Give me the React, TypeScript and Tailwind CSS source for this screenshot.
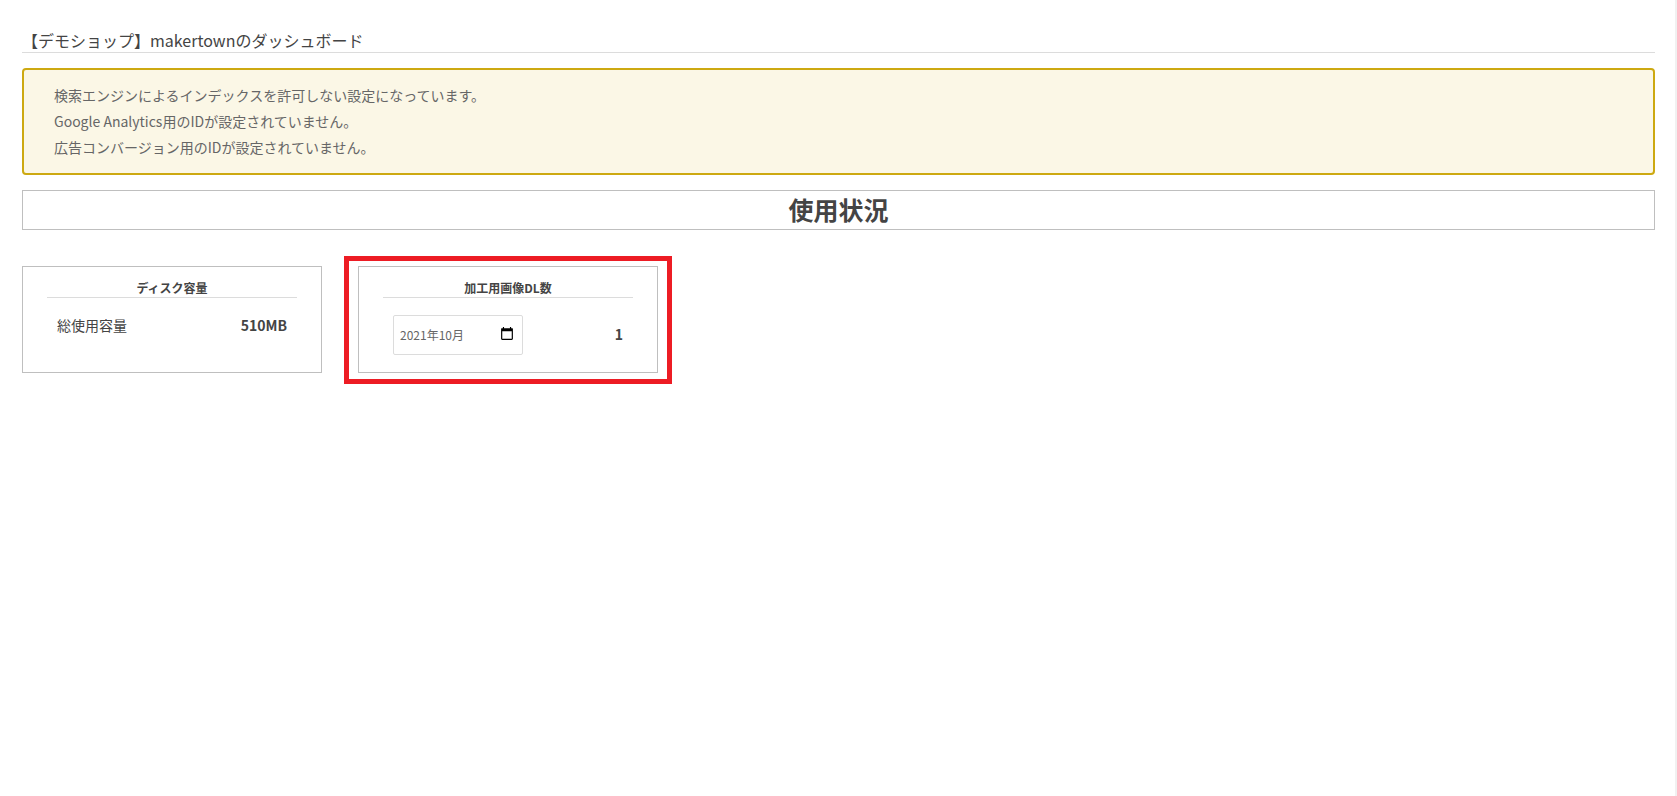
import { useState } from "react";
import type { ReactNode } from "react";

const notices = [
  "検索エンジンによるインデックスを許可しない設定になっています。",
  "Google Analytics用のIDが設定されていません。",
  "広告コンバージョン用のIDが設定されていません。",
];

const CalendarIcon = () => {
  return (
    <svg viewBox="2 1 20 22" className="w-3 h-[13px]" fill="#000" aria-hidden="true">
      <path d="M21 3h-2V1h-2v2H7V1H5v2H3c-.6 0-1 .4-1 1v17c0 1.1.9 2 2 2h16c1.1 0 2-.9 2-2V4c0-.6-.4-1-1-1zm-1 18H4V8h16v13z" />
    </svg>
  );
};

const Card = ({ title, children }: { title: string; children: ReactNode }) => {
  return (
    <section className="flex flex-col w-[300px] h-[107px] border border-[#bfbfbf] px-6 pt-3">
      <h3 className="border-b border-[#dcdcdc] text-center text-[12px] leading-[18px] font-bold">
        {title}
      </h3>
      {children}
    </section>
  );
};

const App = () => {
  const [month, setMonth] = useState("2021年10月");

  return (
    <div
      lang="ja"
      className="min-h-screen border-r-2 border-[#f1f1f1] bg-white pl-[22px] pr-5 pt-7 font-['Noto_Sans_CJK_JP',sans-serif] text-[#444]"
    >
      <h1 className="border-b border-[#dcdcdc] text-[16px] leading-6">
        【デモショップ】makertownのダッシュボード
      </h1>

      <ul className="mt-[15px] rounded border-2 border-[#cda911] bg-[#fbf7e6] px-[30px] pt-3 pb-[13px] text-[14px] leading-[26px] text-[#666]">
        {notices.map((notice) => (
          <li key={notice}>{notice}</li>
        ))}
      </ul>

      <h2 className="mt-[15px] border border-[#bfbfbf] pb-[2px] text-center text-[25px] leading-9 font-bold">
        使用状況
      </h2>

      <div className="flex flex-wrap gap-9 mt-9">
        <Card title="ディスク容量">
          <dl className="flex items-center justify-between px-[10px] pt-[15px] text-[14px] leading-6">
            <dt>総使用容量</dt>
            <dd className="font-bold">510MB</dd>
          </dl>
        </Card>

        <div className="relative">
          <Card title="加工用画像DL数">
            <div className="flex items-start justify-between px-[10px] pt-[17px]">
              <div className="flex items-center w-[130px] h-10 rounded-xs border border-[#dcdcdc] bg-white pl-[6px] pr-[9px]">
                <input
                  type="text"
                  aria-label="加工用画像DL数の対象月"
                  value={month}
                  onChange={(event) => setMonth(event.target.value)}
                  className="flex-1 min-w-0 text-[12px] leading-5 text-[#666] outline-none"
                />
                <button type="button" aria-label="月を選択" className="flex pb-[3px]">
                  <CalendarIcon />
                </button>
              </div>
              <span className="text-[14px] leading-[38px] font-bold">1</span>
            </div>
          </Card>
          <div className="absolute -inset-x-[14px] -top-[10px] -bottom-[11px] border-5 border-[#ed1c24] pointer-events-none" />
        </div>
      </div>
    </div>
  );
};

export default App;
